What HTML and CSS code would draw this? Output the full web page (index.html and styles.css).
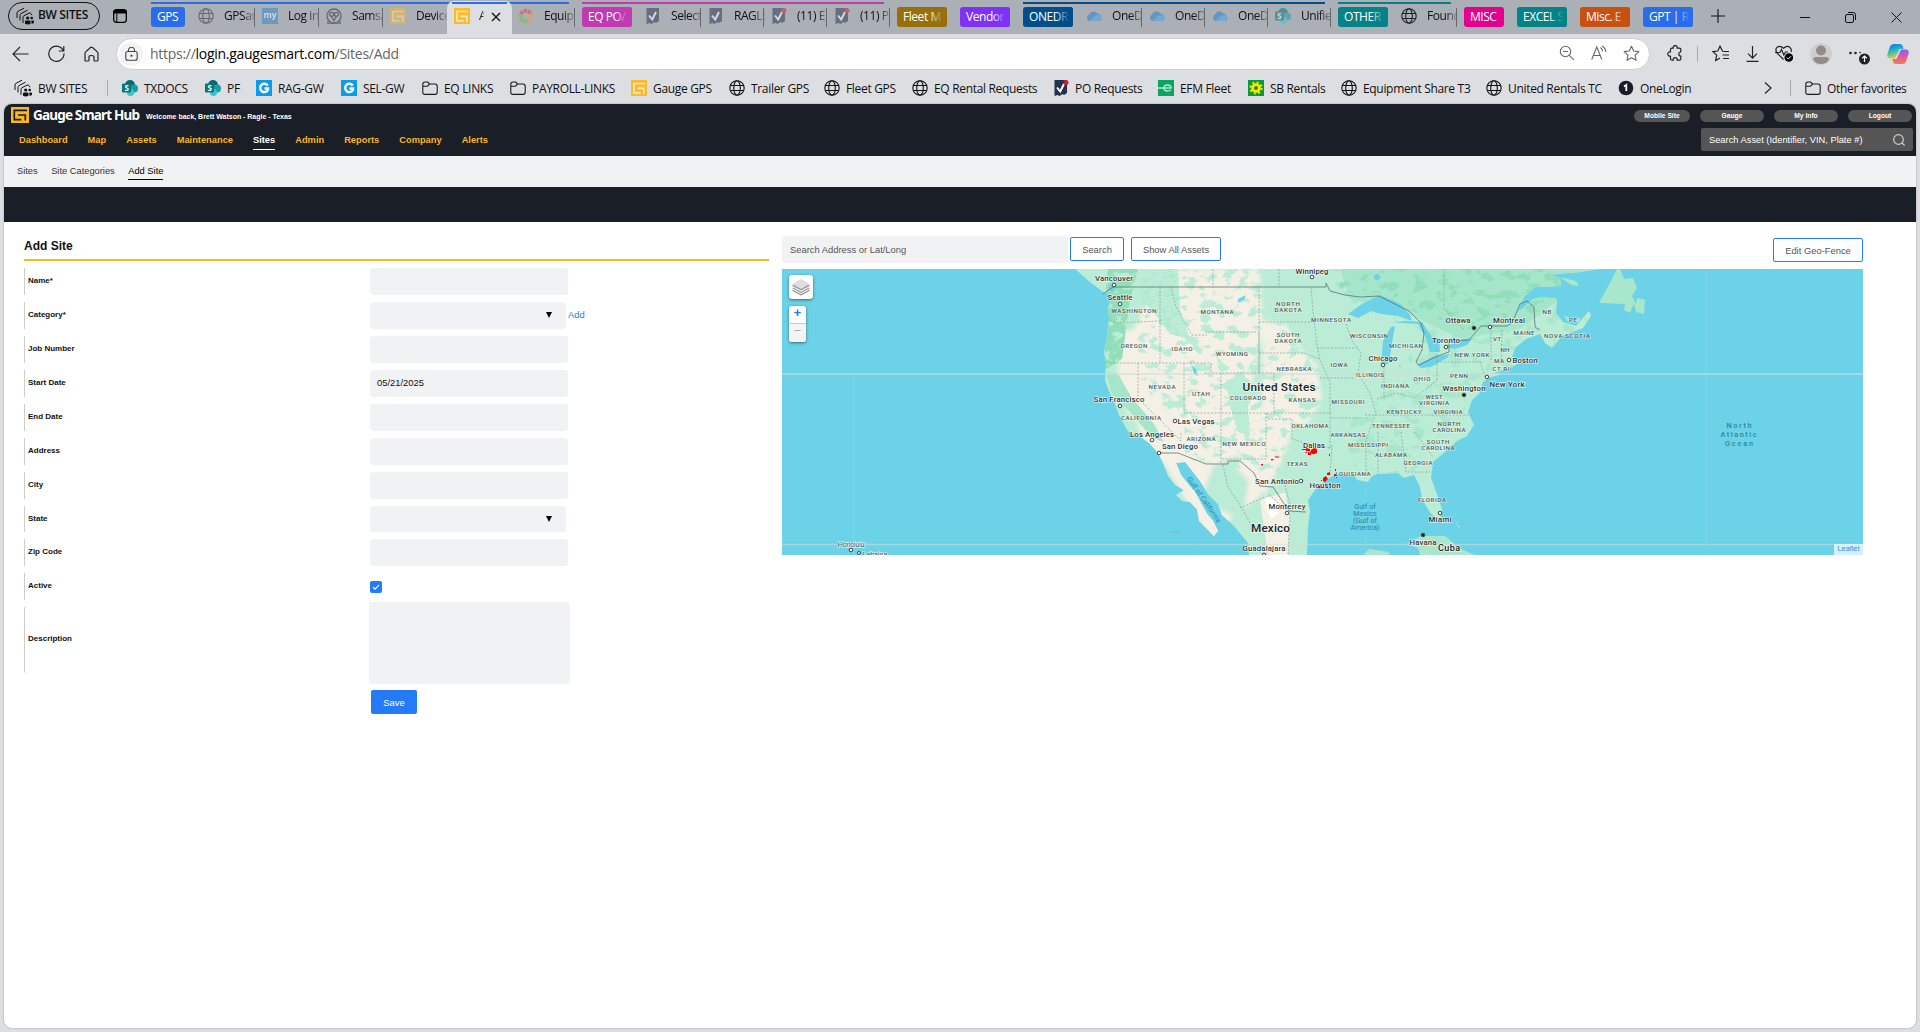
FILE: index.html
```html
<!DOCTYPE html>
<html lang="en">
<head>
<meta charset="utf-8">
<title>Gauge Smart Hub - Add Site</title>
<link rel="stylesheet" href="styles.css">
</head>
<body>
<svg class="defs" width="0" height="0">
  <symbol id="globe" viewBox="0 0 16 16"><g fill="none" stroke="currentColor" stroke-width="1.1"><circle cx="8" cy="8" r="7.2"/><ellipse cx="8" cy="8" rx="3.3" ry="7.2"/><path d="M1.4 5.500h13.200M1.400 10.500h13.200"/></g></symbol>
  <symbol id="folder" viewBox="0 0 16 16"><path d="M.8 4.200q0-2.200 2.200-2.200h2.600l2 2H13q2.200 0 2.200 2.200v6q0 2.200-2.200 2.200H3q-2.200 0-2.200-2.200zM.8 6.300h4.600l2.200-2.300" fill="none" stroke="#1b1b1b" stroke-width="1.1"/></symbol>
  <symbol id="gauge" viewBox="0 0 16 16"><path d="M0 0h16v16H0z" fill="#fdb927"/><path d="M14 3.500H3v9.300h6.500M6.500 8.300h6.300v5.700" fill="none" stroke="#f9e9c8" stroke-width="1.700"/></symbol>
  <symbol id="sharepoint" viewBox="0 0 16 16"><circle cx="8" cy="5" r="5" fill="#036c70"/><circle cx="12" cy="8.500" r="4" fill="#1a9ba1"/><circle cx="8.500" cy="12.500" r="3.500" fill="#37c6d0"/><rect y="3.500" width="9" height="9" rx="1" fill="#03787c"/><text x="4.500" y="11" class="sym-text" font-size="8">S</text></symbol>
  <symbol id="gw" viewBox="0 0 16 16"><path d="M0 0h16v16H0z" fill="#0a9cec"/><path d="M11.800 5.500A4.200 4.200 0 1 0 12 10V8.500H8.500" fill="none" stroke="#fff" stroke-width="2.400"/></symbol>
  <symbol id="check" viewBox="0 0 16 16"><path d="M1.500 0h12.500v13l-3 2-1.500-1-3 2-2-1-3 1z" fill="#22314d"/><path d="M4 7.500l3.200 4L11 4" fill="none" stroke="#fff" stroke-width="2"/></symbol>
  <symbol id="cloud" viewBox="0 0 16 16"><path d="M3.500 13A3.500 3.500 0 0 1 3 6.500 5 5 0 0 1 11.500 5.500 4 4 0 0 1 13 13z" fill="#1f7fce"/><path d="M3.500 13l6-5.500q6-2 6.500 3 0 2.500-3 2.500z" fill="#3fa5e5"/></symbol>
  <symbol id="sites" viewBox="0 0 18 18"><g fill="none" stroke="#111" stroke-width="1"><path d="M1 11V6Q1 4.800 2 4.300L8 1.200M4 13.500V8.300Q4 7.100 5 6.600L11.500 3.200M7 16V10.200Q7 9.200 8 8.700L13 6.100Q14.200 5.500 15 6.600L16 8.200"/></g><g fill="#111"><circle cx="11.700" cy="11" r="1.600"/><circle cx="15.700" cy="11" r="1.300"/><path d="M9 16.800v-2.300q0-1 1-1h3.500q1 0 1 1v2.300q-2.800 1.300-5.500 0zM15.300 13.500h1.700q1 0 1 1v1.300q-1 1-2.500.800z"/></g></symbol>
  <filter id="blotch" x="0" y="0" width="1" height="1">
    <feTurbulence type="fractalNoise" baseFrequency=".08 .11" numOctaves="4" seed="11"/>
    <feColorMatrix values="0 0 0 0 0  0 0 0 0 0  0 0 0 0 0  9 0 0 0 -4.900"/>
    <feComposite operator="in" in="SourceGraphic"/>
  </filter>
  <filter id="soft"><feGaussianBlur stdDeviation="2"/></filter>
</svg>

<header class="tabstrip">
  <div class="workspace"><svg width="18" height="18"><use href="#sites"/></svg><span>BW SITES</span></div>
  <svg class="tabs-btn" width="14" height="14" viewBox="0 0 14 14"><rect x=".7" y=".7" width="12.600" height="12.600" rx="2.500" fill="none" stroke="#000" stroke-width="1.300"/><path d="M1 1.500h12V4H1zM3.800 4v9" fill="#000" stroke="#000" stroke-width="1"/></svg>
  <div class="group blue">
    <span class="chip slim">GPS</span>
    <span class="tab"><svg class="dim"><use href="#globe"/></svg><b>GPSar</b></span>
    <span class="tab"><svg class="dim" viewBox="0 0 16 16"><path d="M0 0h16v16H0z" fill="#2c84c8"/><text x="8" y="9.500" class="sym-text" font-size="8.500">my</text></svg><b>Log in</b></span>
    <span class="tab"><svg class="dim" viewBox="0 0 16 16"><g fill="none" stroke="#222" stroke-width="1.300"><circle cx="8" cy="8" r="7"/><circle cx="5.600" cy="6.300" r="2"/><circle cx="10.400" cy="6.300" r="2"/><path d="M5.800 9L8 12.500 10.200 9M2 13v3h12v-3"/></g></svg><b>Samsa</b></span>
    <span class="tab last"><svg class="dim"><use href="#gauge"/></svg><b>Device</b></span>
    <span class="tab active"><svg><use href="#gauge"/></svg><b>A</b><svg class="close" viewBox="0 0 10 10"><path d="M1 1l8 8M9 1L1 9" stroke="#111" stroke-width="1.300"/></svg></span>
    <span class="tab"><svg class="dim" viewBox="0 0 16 16"><g fill="none" stroke-width="4" stroke-dasharray="3.200 .8"><path d="M3 6A5.500 5.500 0 0 1 13 6" stroke="#f0382c"/><path d="M13 6A5.500 5.500 0 0 1 9 13.300" stroke="#f99a2c"/><path d="M9 13.300A5.500 5.500 0 0 1 3 6" stroke="#67c82b"/></g></svg><b>Equip</b></span>
  </div>
  <div class="group pink">
    <span class="chip">EQ PO/</span>
    <span class="tab"><svg class="dim"><use href="#check"/></svg><b>Select</b></span>
    <span class="tab"><svg class="dim"><use href="#check"/></svg><b>RAGLE</b></span>
    <span class="tab"><svg class="dim" viewBox="0 0 16 16"><use href="#check"/><circle cx="13" cy="2.500" r="2.500" fill="#e0142c"/></svg><b>(11) E</b></span>
    <span class="tab"><svg class="dim" viewBox="0 0 16 16"><use href="#check"/><circle cx="13" cy="2.500" r="2.500" fill="#e0142c"/></svg><b>(11) P</b></span>
  </div>
  <div class="group brown solo"><span class="chip">Fleet M</span></div>
  <div class="group violet solo"><span class="chip">Vendor</span></div>
  <div class="group navy">
    <span class="chip">ONEDR</span>
    <span class="tab"><svg class="dim"><use href="#cloud"/></svg><b>OneD</b></span>
    <span class="tab"><svg class="dim"><use href="#cloud"/></svg><b>OneD</b></span>
    <span class="tab"><svg class="dim"><use href="#cloud"/></svg><b>OneD</b></span>
    <span class="tab"><svg class="dim"><use href="#sharepoint"/></svg><b>Unifie</b></span>
  </div>
  <div class="group teal">
    <span class="chip">OTHER</span>
    <span class="tab"><svg><use href="#globe"/></svg><b>Found</b></span>
  </div>
  <div class="group magenta solo"><span class="chip misc">MISC</span></div>
  <div class="group teal solo"><span class="chip">EXCEL S</span></div>
  <div class="group orange solo"><span class="chip">Misc. E</span></div>
  <div class="group blue solo"><span class="chip">GPT | R</span></div>
  <svg class="plus" width="14" height="14" viewBox="0 0 14 14"><path d="M7 0v14M0 7h14" stroke="#111" stroke-width="1.100"/></svg>
  <div class="winctl">
    <svg width="10" height="11" viewBox="0 0 10 11"><path d="M0 5.500h10" stroke="#111"/></svg>
    <svg width="11" height="11" viewBox="0 0 11 11"><g fill="none" stroke="#111"><rect x=".5" y="2.500" width="8" height="8" rx="1.500"/><path d="M3 .5h5q2.500 0 2.500 2.500v5"/></g></svg>
    <svg width="11" height="11" viewBox="0 0 11 11"><path d="M.5.500l10 10M10.500.500l-10 10" stroke="#111"/></svg>
  </div>
</header>

<div class="toolbar">
  <svg class="nav" width="17" height="16" viewBox="0 0 17 16"><path d="M16.500 8H1M8 1L1 8l7 7" fill="none" stroke="#222" stroke-width="1.100"/></svg>
  <svg class="nav" width="17" height="17" viewBox="0 0 17 17"><path d="M15.500 6A7.600 7.600 0 1 0 16 8.500M15.800 1v5h-5" fill="none" stroke="#222" stroke-width="1.200"/></svg>
  <svg class="nav" width="15" height="16" viewBox="0 0 15 16"><path d="M1 7.500q0-1 .7-1.600L6.500 1.500q1-.800 2 0l4.800 4.400q.7.600.7 1.600V14q0 1-1 1h-2q-1 0-1-1v-3q0-1.500-2.500-1.500T5 11v3q0 1-1 1H2q-1 0-1-1z" fill="none" stroke="#222" stroke-width="1.200"/></svg>
  <div class="urlbar">
    <span class="lock"><svg width="13" height="14" viewBox="0 0 13 14"><rect x=".8" y="4.500" width="11.400" height="8.700" rx="2" fill="none" stroke="#444" stroke-width="1.100"/><path d="M3.500 4.500V3.300a3 3 0 0 1 6 0v1.200" fill="none" stroke="#444" stroke-width="1.100"/><circle cx="6.500" cy="8.800" r="1" fill="#222"/></svg></span>
    <span class="url">https://<em>login.gaugesmart.com</em>/Sites/Add</span>
    <span class="url-icons">
      <svg width="16" height="16" viewBox="0 0 16 16"><g fill="none" stroke="#666" stroke-width="1.100"><circle cx="6.500" cy="6.500" r="5.200"/><path d="M10.300 10.300l4.500 4.500M4 6.500h5"/></g></svg>
      <svg width="16" height="16" viewBox="0 0 16 16"><g fill="none" stroke="#666" stroke-width="1.100"><path d="M.7 14.500L5.800 2l5 12.500M2.500 10.500h6.700M9.500 2.500q2 1.500 2 4M11 1q3.800 2.200 3.800 6"/></g></svg>
      <svg width="17" height="17" viewBox="0 0 17 17"><path d="M8.500 1.200l2.200 4.800 5.200.600-3.900 3.500 1.100 5.200-4.600-2.600-4.600 2.600L5 10.100 1.100 6.600l5.200-.600z" fill="none" stroke="#666" stroke-width="1.100" stroke-linejoin="round"/></svg>
    </span>
  </div>
  <div class="tools">
    <svg width="16" height="17" viewBox="0 0 16 17"><path d="M5 3.200h1.300a2 2 0 1 1 3.800 0h2.400q1.300 0 1.300 1.300V7a2 2 0 1 0 0 4v2.700q0 1.500-1.300 1.500h-2.400a2 2 0 1 0-3.800 0H5q-1.500 0-1.500-1.500V11a2.100 2.100 0 1 1 0-4V4.500q0-1.300 1.500-1.300z" fill="none" stroke="#222" stroke-width="1.200" stroke-linejoin="round"/></svg>
    <i class="sep"></i>
    <svg width="17" height="17" viewBox="0 0 17 17"><path d="M10.500 6L8 1.200 5.800 6 1 6.600l3.700 3.500-1 5.400L8 13M10.500 6.500H17M10.500 10H17M11 13.500h6" fill="none" stroke="#222" stroke-width="1.200"/></svg>
    <svg width="13" height="17" viewBox="0 0 13 17"><path d="M6.500 1v12M2 8.700l4.500 4.500L11 8.700M.5 16.300h12" fill="none" stroke="#222" stroke-width="1.200"/></svg>
    <svg width="18" height="17" viewBox="0 0 18 17"><path d="M8.500 14.500L2 8Q-.500 4 2.500 2q3-1.500 6 1.300Q11.500.500 14.500 2q2.500 2 1.500 5M0 7.500h5l1.500-3 2.300 5.500L10.500 7H13" fill="none" stroke="#222" stroke-width="1.200"/><circle cx="13.800" cy="12.500" r="4.300"/><path d="M11.800 12.500l1.500 1.500 2.700-2.800" fill="none" stroke="#fff"/></svg>
    <svg width="22" height="22" viewBox="0 0 22 22"><circle cx="11" cy="11" r="11" fill="#d0cecd"/><circle cx="11" cy="7.500" r="5" fill="#918c89"/><path d="M3 16.500q0-2.500 3-2.500h10q3 0 3 2.500Q16.500 21 11 21t-8-4.500z" fill="#918c89"/></svg>
    <svg width="21" height="22" viewBox="0 0 21 22"><g fill="#222"><circle cx="1.500" cy="10" r="1.300"/><circle cx="6.500" cy="10" r="1.300"/><circle cx="11" cy="9.500" r=".8"/><circle cx="15.500" cy="16" r="5.500"/></g><path d="M15.500 19v-6M13.200 15.200l2.300-2.200 2.300 2.200" fill="none" stroke="#fff" stroke-width="1.200"/></svg>
    <svg width="22" height="20" viewBox="0 0 22 20"><defs><linearGradient id="c1" x2=".3" y2="1"><stop stop-color="#1470dd"/><stop offset=".5" stop-color="#1fb5c9"/><stop offset="1" stop-color="#e6cc2c"/></linearGradient><linearGradient id="c2" x2="0" y2="1"><stop stop-color="#8a5cf0"/><stop offset=".5" stop-color="#e05aa8"/><stop offset="1" stop-color="#ff7a45"/></linearGradient></defs><path d="M6.500 0h6.500q2.500 0 3 2.500L16.500 5h-4L8 14.500H3Q-.500 14 .5 10L3 2.500Q4 0 6.500 0z" fill="url(#c1)"/><path d="M15.500 20H9q-2.500 0-3-2.500l-.5-2.500h4L14 5.500h5q3.500.500 2.500 4.500L19 17.500q-1 2.500-3.500 2.500z" fill="url(#c2)"/></svg>
  </div>
</div>

<nav class="bookmarks">
  <span class="mark"><svg width="18" height="18"><use href="#sites"/></svg>BW SITES</span>
  <i class="sep"></i>
  <span class="mark"><svg><use href="#sharepoint"/></svg>TXDOCS</span>
  <span class="mark"><svg><use href="#sharepoint"/></svg>PF</span>
  <span class="mark"><svg><use href="#gw"/></svg>RAG-GW</span>
  <span class="mark"><svg><use href="#gw"/></svg>SEL-GW</span>
  <span class="mark"><svg><use href="#folder"/></svg>EQ LINKS</span>
  <span class="mark"><svg><use href="#folder"/></svg>PAYROLL-LINKS</span>
  <span class="mark"><svg><use href="#gauge"/></svg>Gauge GPS</span>
  <span class="mark"><svg><use href="#globe"/></svg>Trailer GPS</span>
  <span class="mark"><svg><use href="#globe"/></svg>Fleet GPS</span>
  <span class="mark"><svg><use href="#globe"/></svg>EQ Rental Requests</span>
  <span class="mark"><svg viewBox="0 0 16 16"><use href="#check"/><circle cx="13" cy="2.500" r="2.500" fill="#e0142c"/></svg>PO Requests</span>
  <span class="mark"><svg viewBox="0 0 16 16"><path d="M0 0h16v16H0z" fill="#0aa562"/><path d="M0 8h13q0-3-3.500-3T6 8q0 3 3.500 3 2 0 3.500-1" fill="none" stroke="#b5e8cf" stroke-width="1.500"/></svg>EFM Fleet</span>
  <span class="mark"><svg viewBox="0 0 16 16"><path d="M0 0h16v16H0z" fill="#0a9a3a"/><circle cx="8" cy="8" r="3.400" fill="none" stroke="#ffe500" stroke-width="2.800"/><circle cx="8" cy="8" r="5.600" fill="none" stroke="#ffe500" stroke-width="2" stroke-dasharray="2 2.400"/></svg>SB Rentals</span>
  <span class="mark"><svg><use href="#globe"/></svg>Equipment Share T3</span>
  <span class="mark"><svg><use href="#globe"/></svg>United Rentals TC</span>
  <span class="mark"><svg viewBox="0 0 16 16"><circle cx="8" cy="8" r="7.300" fill="#1a1c28"/><path d="M6 6.500L8.300 5v6" fill="none" stroke="#fff" stroke-width="1.800"/></svg>OneLogin</span>
  <svg class="chev" width="8" height="12" viewBox="0 0 8 12"><path d="M1 .5L7 6l-6 5.500" fill="none" stroke="#222" stroke-width="1.200"/></svg>
  <i class="sep"></i>
  <span class="mark other"><svg><use href="#folder"/></svg>Other favorites</span>
</nav>

<main class="page">
  <header class="hub">
    <div class="hub-left">
      <div class="brand">
        <svg width="18" height="16" viewBox="0 0 18 16"><path d="M0 0h18v16H0z" fill="#fbb623"/><path d="M16 3.300H3.300v9.400h7M7 8h7.300v5.500" fill="none" stroke="#1a1e26" stroke-width="1.700"/></svg>
        <strong>Gauge Smart Hub</strong><small>Welcome back, Brett Watson - Ragle - Texas</small>
      </div>
      <nav class="menu"><a>Dashboard</a><a>Map</a><a>Assets</a><a>Maintenance</a><a class="on">Sites</a><a>Admin</a><a>Reports</a><a>Company</a><a>Alerts</a></nav>
    </div>
    <div class="hub-right">
      <div class="pills"><a class="narrow">Mobile Site</a><a>Gauge</a><a>My Info</a><a>Logout</a></div>
      <div class="asset-search"><span>Search Asset (Identifier, VIN, Plate #)</span><svg width="12" height="12" viewBox="0 0 12 12"><g fill="none" stroke="#ccc" stroke-width="1.200"><circle cx="5.500" cy="5.500" r="4.800"/><path d="M9 9l2.700 2.500"/></g></svg></div>
    </div>
  </header>
  <nav class="submenu"><a>Sites</a><a>Site Categories</a><a class="on">Add Site</a></nav>
  <div class="band"></div>
  <div class="content">
    <form class="site-form">
      <h1>Add Site</h1>
      <div class="row"><label>Name*</label><span class="field"></span></div>
      <div class="row"><label>Category*</label><span class="field select"></span><a class="add">Add</a></div>
      <div class="row"><label>Job Number</label><span class="field"></span></div>
      <div class="row"><label>Start Date</label><span class="field">05/21/2025</span></div>
      <div class="row"><label>End Date</label><span class="field"></span></div>
      <div class="row"><label>Address</label><span class="field"></span></div>
      <div class="row"><label>City</label><span class="field"></span></div>
      <div class="row state"><label>State</label><span class="field select"></span></div>
      <div class="row"><label>Zip Code</label><span class="field"></span></div>
      <div class="row active-row"><label>Active</label><span class="checkbox"><svg width="8" height="8" viewBox="0 0 8 8"><path d="M1 4.200l2 2L7 2" fill="none" stroke="#fff" stroke-width="1.100"/></svg></span></div>
      <div class="row desc"><label>Description</label><span class="field area"></span></div>
      <span class="save">Save</span>
    </form>
    <section class="map-col">
      <div class="map-tools"><span class="addr">Search Address or Lat/Long</span><span class="btn search">Search</span><span class="btn show">Show All Assets</span><span class="btn fence">Edit Geo-Fence</span></div>
      <div class="map">
        <svg width="1081" height="286" viewBox="782 269 1081 286">
          <defs>
            <path id="land" d="M1075 269L1090 282 1103 292 1112 296 1108 307 1109 320 1107 337 1104 352 1106 362 1105 380 1108 389 1115 404 1119 415 1127 430 1131 434 1142 438 1150 444 1158 453 1163 463 1168 476 1175 485 1184 490 1176 495 1182 501 1190 502 1197 509 1199 521 1208 530 1214 536 1218 531 1213 521 1207 514 1202 505 1195 492 1188 484 1181 475 1176 463 1185 462 1193 472 1200 481 1208 494 1218 504 1222 515 1234 526 1248 543 1249 555H1307L1308 527 1310 511 1308 500 1318 486 1331 477 1338 474 1346 474 1354 475 1357 480 1368 482 1372 476 1378 474 1398 473 1404 478 1414 475 1420 487 1422 499 1431 514 1440 520 1442 509 1437 494 1431 478 1433 462 1445 452 1457 441 1467 436 1474 425 1468 412 1472 400 1479 394 1483 382 1491 377 1503 374 1494 373 1510 368 1521 362 1512 357 1515 348 1526 339 1540 334 1545 343 1552 348 1562 336 1583 328 1591 316 1589 311 1576 326 1563 322 1556 313 1557 299 1544 297 1533 299 1522 309 1517 312 1524 297 1535 287 1561 286 1560 278 1548 275 1580 272 1600 269z"/>
            <clipPath id="on-land"><use href="#land"/></clipPath>
          </defs>
          <path d="M782 269h1081v286H782z" fill="#6cd2e7"/>
          <use href="#land" fill="#bbecd6"/>
          <g clip-path="url(#on-land)">
            <path d="M1320 269h290v85l-90 20-45 15-20 40-50 50h-45l-20-50 60-50 20-50-60-20z" fill="#a9e7cc" filter="url(#blotch)"/>
            <path d="M1340 269h260l-80 60-60 10-50-25-60-15z" fill="#a5e6ca"/>
            <path d="M1340 269h240l-50 50-60 10-130-40z" fill="#90dfba" filter="url(#blotch)"/>
            <g filter="url(#soft)"><path d="M1155 269h105l3 60-6 26-4 25 10 35 5 42-8 40-30 22-16 26-18-28-30-50-25-32-10-30-8-25 6-45 10-15z" fill="#f5f0e5"/><path d="M1200 500l14-35 26-10 10 20-8 45z" fill="#bbecd6"/><path d="M1120 330h38v36l-18 10 15 28 22 36-8 6-40-32-12-40z" fill="#f5f0e5"/><path d="M1262 320l25 5 15 25 15 15 5 35-15 25-45-5z" fill="#f5f0e5"/><path d="M1255 410l38 15-8 30-20 40-28-25z" fill="#f5f0e5"/></g>
            <path d="M1165 455l16 32 30 46 8-6-40-62z" fill="#f5f0e5"/>
            <path d="M1260 500l25-8 5 25-2 38h-20z" fill="#f5f0e5"/>
            <path d="M1108 269h30l-8 30-8 60-16 10-3-40z" fill="#90dfba"/>
            <path d="M1108 269h30l-8 30-8 60-16 10-3-40z" fill="#bbecd6" filter="url(#blotch)"/>
            <path d="M1140 269h38l2 40 10 30-20-5-15-20-14-15z" fill="#bbecd6"/>
            <path d="M1140 269h38l2 40 10 30-20-5-15-20-14-15z" fill="#80dab0" filter="url(#blotch)"/>
            <path d="M1135 269h115v70l-10 60-30 50-70-60z" fill="#bbecd6" filter="url(#blotch)"/>
            <path d="M1180 269h155v140l-40 70-110-20z" fill="#bbecd6" filter="url(#blotch)"/>
            <path d="M1226 380l18-4 14 12-10 18 2 30-12-4-8-26z" fill="#bbecd6"/>
            <path d="M1106 372l12 2 14 24 22 26 10 18-12-4-22-26-18-18z" fill="#a5e6ca"/>
            <path d="M1265 495l10 6 4 12-8 6-4-10z" fill="#fff"/>
          </g>
          <g fill="#6cd2e7">
            <path d="M1348 314l14-10 18-9 20 9 10 11 2 6-14-5-17-2-10-3-13 7z"/><path d="M1381 365l2-24 8-14 4-1-3 17-2 14-2 7z"/><path d="M1392 323l14-2 16 1 10 15 7 1 1 14-10 0-4-14-8-14-14-1z"/><path d="M1417 365l16-8 17-3-3 4-16 9-10 1z"/><path d="M1445 347l18-8 10-1-6 7-12 4z"/><path d="M1192 366l4 3 2 7-4-2zM1238 299l8-4-2 5-6 2z"/><circle cx="1377" cy="277" r="3"/><circle cx="1112" cy="288" r="3"/>
          </g>
          <g fill="#a9e7cc">
            <path d="M1617 269l-6 12-12 22 26 1-1 6 6 3 4-9 2 8 8 2 1-14-8-2-1 6-4-8 5-8-4-10-9 1-4-10z"/><path d="M1560 277l16 4 3 5-8-1z"/>
            <path d="M1407 544l14-8 24 0 14 12 16 7h-55l-2-7z"/><path d="M1363 555l6-6 20 3v3z"/><path d="M1451 506l8 1M1455 519l5 9-2-1z"/><path d="M1564 315l9 5 8-2-2 4-12-1z"/>
          </g>
          <g fill="none" stroke="#d3dad7" opacity=".55"><path d="M782 374h1081" stroke-width="2"/><path d="M782 544.500h1081" stroke-width="1.500"/></g>
          <path d="M853.500 374v181M1194.500 544v11M1365.500 480v75M1706.500 269v286" stroke="#8ddbea" stroke-width=".7" opacity=".6"/>
          <g fill="none" stroke="#8fa8a0" stroke-width=".8" stroke-dasharray="2 1.500">
            <path d="M1107 318l9 5 44-2M1160 287v76M1106 363h105v10M1160 321l2-2M1171 287l5 20 8 14 8 14h15M1205 332h54v41h-54M1259 287v86M1259 322h54M1259 353h45l15 6M1259 373h15v40M1138 363v35l43 43v-9M1184 363v50h90M1221 373v90M1274 413h56v-31l-10-22-3-15-4-34-2-24M1213 269v18M1279 269v18M1267 413v6h25v20l20 6 20 3M1266 413v46h-45M1317 348h40M1346 324l5 15 10 14-3 20M1320 378h35M1330 413v35h-3M1331 418h38M1358 373l12 20 6 20-10 27v35M1384 367v32M1400 367v-3M1437 350v30M1365 415h108M1377 399l20-6 18 5 22-18M1378 432v45M1401 432l5 40h24M1415 432l18 25M1437 362h46M1480 362l5 15M1444 269v40l20 20M1491 330v30M1502 330l-1 35M1170 532h10M1330 475l2-30"/>
            <path d="M1223 465l5 22 14 21 8 15M1240 508l30-13 20 20-2 40M1285 485l5 20"/>
          </g>
          <g fill="none" stroke="#4b5f60" stroke-width=".8" opacity=".85">
            <path d="M1103 294l10-7H1326v-4l4 8 15 4 15 2 19-1 30 15 12 12 3 10-2 17-6 12 3 3 16-8 14-5v-11l20-1 12-14h26l5-3 8-19 7-3 7 6 1 20 5 3"/>
            <path d="M1159 453l19 0 28 11h22v-3h12l14 12 6 13 13 1 12 18 4 6 17 1"/>
          </g>
          <g fill="#fff" stroke="#444">
            <circle cx="1114" cy="285" r="1.800"/><circle cx="1120" cy="304" r="1.800"/><circle cx="1120" cy="406" r="1.800"/><circle cx="1175" cy="421" r="1.800"/><circle cx="1152" cy="440" r="1.800"/><circle cx="1159" cy="453" r="1.800"/><circle cx="1312" cy="277" r="1.800"/><circle cx="1301" cy="481" r="1.800"/><circle cx="1287" cy="513" r="1.800"/><circle cx="1264" cy="555" r="1.800"/><circle cx="1383" cy="365" r="1.800"/><circle cx="1490" cy="327" r="1.800"/><circle cx="1446" cy="347" r="1.800"/><circle cx="1509" cy="360" r="1.800"/><circle cx="1487" cy="377" r="1.800"/><circle cx="1440" cy="513" r="1.800"/><circle cx="851" cy="550" r="1.800"/><circle cx="859" cy="553" r="1.500"/>
            <circle cx="1474" cy="328" r="1.800" fill="#222"/><circle cx="1464" cy="395" r="1.800" fill="#222"/><circle cx="1423" cy="535" r="1.800" fill="#222"/>
          </g>
          <g class="state-name">
            <text x="1134" y="313" textLength="45">WASHINGTON</text><text x="1217" y="314" textLength="33">MONTANA</text><text x="1134" y="348" textLength="27">OREGON</text><text x="1182" y="350.500" textLength="21">IDAHO</text><text x="1232" y="356" textLength="32">WYOMING</text><text x="1162" y="389" textLength="27">NEVADA</text><text x="1201" y="396" textLength="18">UTAH</text><text x="1248" y="400" textLength="36">COLORADO</text><text x="1141" y="420" textLength="40">CALIFORNIA</text><text x="1201" y="441" textLength="29">ARIZONA</text><text x="1244" y="446" textLength="43">NEW MEXICO</text><text x="1288" y="305.500" textLength="24">NORTH</text><text x="1288" y="311.500" textLength="27">DAKOTA</text><text x="1288" y="337" textLength="23">SOUTH</text><text x="1288" y="343" textLength="27">DAKOTA</text><text x="1331" y="322" textLength="40">MINNESOTA</text><text x="1294" y="371" textLength="35">NEBRASKA</text><text x="1339" y="366.500" textLength="17">IOWA</text><text x="1302" y="401.500" textLength="27">KANSAS</text><text x="1348" y="403.500" textLength="33">MISSOURI</text><text x="1310" y="428" textLength="37">OKLAHOMA</text><text x="1348" y="437" textLength="35">ARKANSAS</text><text x="1297" y="466" textLength="21">TEXAS</text><text x="1353" y="476" textLength="35">LOUISIANA</text><text x="1369" y="338" textLength="38">WISCONSIN</text><text x="1406" y="348" textLength="34">MICHIGAN</text><text x="1370" y="376.500" textLength="28">ILLINOIS</text><text x="1395" y="388" textLength="28">INDIANA</text><text x="1422" y="381" textLength="17">OHIO</text><text x="1459" y="378" textLength="18">PENN</text><text x="1472" y="357" textLength="35">NEW YORK</text><text x="1497" y="341" textLength="8">VT</text><text x="1505" y="351.500" textLength="9">NH</text><text x="1499" y="362.500" textLength="10">MA</text><text x="1501" y="370.500" textLength="17">CT RI</text><text x="1524" y="334.500" textLength="21">MAINE</text><text x="1547" y="314" textLength="9">NB</text><text x="1573" y="322" textLength="8">PE</text><text x="1567" y="338" textLength="46">NOVA SCOTIA</text><text x="1434" y="399" textLength="17">WEST</text><text x="1434" y="405" textLength="30">VIRGINIA</text><text x="1404" y="414" textLength="35">KENTUCKY</text><text x="1448" y="414" textLength="29">VIRGINIA</text><text x="1391" y="428" textLength="38">TENNESSEE</text><text x="1449" y="426" textLength="23">NORTH</text><text x="1449" y="432" textLength="33">CAROLINA</text><text x="1438" y="444" textLength="23">SOUTH</text><text x="1438" y="450" textLength="33">CAROLINA</text><text x="1368" y="446.500" textLength="40">MISSISSIPPI</text><text x="1391" y="456.500" textLength="32">ALABAMA</text><text x="1418" y="465" textLength="29">GEORGIA</text><text x="1432" y="501.500" textLength="28">FLORIDA</text>
          </g>
          <g class="city">
            <text x="1114" y="281" textLength="38">Vancouver</text><text x="1120" y="300" textLength="25">Seattle</text><text x="1119" y="402" textLength="51">San Francisco</text><text x="1196" y="424" textLength="37">Las Vegas</text><text x="1152" y="437" textLength="44">Los Angeles</text><text x="1180" y="449" textLength="36">San Diego</text><text x="1312" y="274" textLength="33">Winnipeg</text><text x="1277" y="484" textLength="44">San Antonio</text><text x="1325" y="488" textLength="31">Houston</text><text x="1314" y="448" textLength="22">Dallas</text><text x="1287" y="509" textLength="37">Monterrey</text><text x="1264" y="551" textLength="43">Guadalajara</text><text x="1383" y="361" textLength="29">Chicago</text><text x="1458" y="323" textLength="25">Ottawa</text><text x="1509" y="323" textLength="32">Montreal</text><text x="1446" y="343" textLength="28">Toronto</text><text x="1525" y="363" textLength="25">Boston</text><text x="1507" y="387" textLength="35">New York</text><text x="1464" y="391" textLength="43">Washington</text><text x="1440" y="522" textLength="23">Miami</text><text x="1423" y="545" textLength="27">Havana</text><text x="851" y="547" textLength="27" class="thin">Honolulu</text><text x="875" y="556.500" textLength="25" class="thin">Lahaina</text>
          </g>
          <g class="country"><text x="1279" y="390.500" textLength="73">United States</text><text x="1270.500" y="532" textLength="39">Mexico</text><text x="1449" y="551" textLength="22" class="small">Cuba</text></g>
          <g class="sea"><text x="1365" y="509">Gulf of</text><text x="1365" y="516">Mexico</text><text x="1365" y="522.500">(Gulf of</text><text x="1365" y="529.500">America)</text><text transform="translate(1202 501) rotate(55)" textLength="54">Gulf of California</text><g class="ocean"><text x="1739" y="428" textLength="25">North</text><text x="1738.500" y="437" textLength="36">Atlantic</text><text x="1739" y="445.500" textLength="28">Ocean</text></g></g>
          <g fill="#f00"><path d="M1302 449h7v1h-7zM1306 448l4 1v2h-4zM1311 450l3-2 3 1v4l-3 1-4-1zM1304 453l3-1v1zM1308 452l3 1v2h-3zM1261 464h2v1.200h-2zM1271 459h2.500v1.300h-2.500zM1275 456.500h4v1h-4zM1329 454h1v2h-1zM1327 473l3-1v3h-3zM1323 478l3-2 2 3-3 3-2-1zM1334 474h2v2h-2zM1335 469h1v2h-1zM1336 477h1v1h-1zM1321 480h1v1h-1zM1318 486h2v2h-2z"/><circle cx="1313.500" cy="452" r="2.200"/></g>
        </svg>
        <span class="layers"><svg width="18" height="18" viewBox="0 0 18 18"><path d="M0 12.500l9-5 9 5-9 5z" fill="#777"/><path d="M0 11.500l9-5 9 5-9 5z" fill="#eee"/><path d="M0 10l9-5 9 5-9 5z" fill="#888"/><path d="M0 9l9-5 9 5-9 5z" fill="#eee"/><path d="M0 7.500l9-5 9 5-9 5z" fill="#999"/><path d="M.3 6L9 1l8.700 5L9 11z" fill="#dedede"/></svg></span>
        <span class="zoomer"><b>+</b><b class="off">−</b></span>
        <span class="credit">Leaflet</span>
      </div>
    </section>
  </div>
</main>
</body>
</html>
```
FILE: styles.css
```css
* { box-sizing: border-box; }
body { margin: 0; width: 1920px; height: 1032px; overflow: hidden; background: #dddee2; color: #111; font: 12px "Open Sans", "Noto Sans", sans-serif; }
svg { display: block; flex: none; }
.defs { position: absolute; }
.sym-text { fill: #fff; font-family: "Open Sans", sans-serif; font-weight: 700; text-anchor: middle; }

/* Tab strip */
.tabstrip { display: flex; height: 34px; background: #abafb6; white-space: nowrap; }
.workspace { display: flex; align-items: center; gap: 4px; width: 92px; height: 28px; margin: 2px 0 0 8px; padding-left: 7px; border: 1px solid #111; border-radius: 14px; font-weight: 600; font-size: 12px; line-height: 24px; letter-spacing: -.35px; }
.workspace span { padding-bottom: 2px; }
.tabs-btn { margin: 9px 24px 0 13px; }
.group { display: flex; position: relative; --c: #286eec; }
.group::before { content: ""; position: absolute; left: 0; right: 13px; top: 2px; height: 2px; background: var(--c); }
.group.solo::before { display: none; }
.pink { --c: #c239b3; }
.brown { --c: #986f0b; }
.violet { --c: #8031f8; }
.navy { --c: #004e8c; }
.teal { --c: #038387; }
.magenta { --c: #e3008c; }
.orange { --c: #ca5010; }
.chip { width: 50px; height: 20px; margin: 7px 13px 0 0; padding-left: 6px; border-radius: 3px; background: var(--c); color: #fff; line-height: 19px; letter-spacing: -.45px; overflow: hidden; position: relative; }
.chip::after { content: ""; position: absolute; right: 0; top: 0; width: 18px; height: 20px; background: linear-gradient(90deg, transparent, var(--c) 80%); }
.chip.slim { width: 34px; }
.chip.slim::after, .chip.misc::after { display: none; }
.chip.misc { width: 40px; }
.tab { display: flex; width: 63px; height: 34px; position: relative; }
.blue .tab { width: 64px; }
.tab svg { width: 16px; height: 16px; margin-top: 8px; color: #222; }
.tab .dim { opacity: .5; }
.tab b { width: 31px; margin-left: 10px; overflow: hidden; font-weight: 400; line-height: 32px; letter-spacing: -.45px; -webkit-mask-image: linear-gradient(90deg, #000 60%, rgba(0,0,0,.15)); mask-image: linear-gradient(90deg, #000 60%, rgba(0,0,0,.15)); }
.tab::after { content: ""; position: absolute; right: 7px; top: 8px; height: 19px; width: 1px; background: #666a70; }
.tab.last::after, .tab.active::after { display: none; }
.tab.active::before { content: ""; position: absolute; left: -7px; top: 1px; width: 65px; height: 33px; border-radius: 7px 7px 0 0; background: linear-gradient(#286eec, #286eec) no-repeat 5px 1px / 55px 2px, #dddee2; }
.tab.active svg, .tab.active b { position: relative; }
.tab.active b { width: 5px; margin-left: 9px; }
.tab.active .close { width: 10px; height: 10px; margin: 12px 0 0 7px; }
.plus { margin: 9px 0 0 5px; }
.winctl { display: flex; gap: 35px; margin: 12px 18px 0 auto; }

/* Toolbar */
.toolbar { display: flex; align-items: center; height: 39px; padding: 0 11px 0 12px; }
.nav { margin-right: 19px; }
.urlbar { display: flex; align-items: center; width: 1534px; height: 32px; margin-left: -2px; padding: 0 9px 0 2px; border: 1px solid #cfd0d4; border-radius: 16px; background: #fff; }
.lock { display: flex; align-items: center; justify-content: center; width: 24px; height: 24px; border-radius: 12px; background: #f3f3f4; }
.url { margin-left: 7px; color: #666; font-size: 14px; letter-spacing: -.28px; }
.url em { color: #000; font-style: normal; }
.url-icons { display: flex; gap: 16px; margin-left: auto; }
.tools { display: flex; align-items: center; justify-content: space-between; flex: 1; margin-left: 17px; }
.sep { width: 1px; height: 16px; background: #a9abb0; }
.tools .sep { margin: 0 -3px; }

/* Bookmarks */
.bookmarks { display: flex; align-items: center; height: 31px; padding: 0 0 1px 14px; white-space: nowrap; letter-spacing: -.32px; }
.mark { display: flex; align-items: center; gap: 6px; width: 85px; flex: none; }
.mark svg { width: 16px; height: 16px; }
.mark:nth-child(1) { width: 93px; }
.mark:nth-child(1) svg { width: 18px; height: 18px; }
.mark:nth-child(3) { width: 83px; margin-left: 14px; }
.mark:nth-child(4) { width: 51px; }
.mark:nth-child(6) { width: 81px; }
.mark:nth-child(7) { width: 88px; }
.mark:nth-child(8) { width: 121px; }
.mark:nth-child(9) { width: 98px; }
.mark:nth-child(10) { width: 95px; }
.mark:nth-child(11) { width: 88px; }
.mark:nth-child(12) { width: 141px; }
.mark:nth-child(13) { width: 105px; }
.mark:nth-child(14) { width: 90px; }
.mark:nth-child(15) { width: 93px; }
.mark:nth-child(16) { width: 145px; }
.mark:nth-child(17) { width: 132px; }
.mark:nth-child(18) { width: 146px; }
.chev { margin-right: 18px; }
.mark.other { margin-left: 14px; width: 110px; }

/* Page */
.page { width: 1912px; height: 924px; margin-left: 4px; overflow: hidden; border-radius: 8px; background: #fff; box-shadow: 0 0 2px #999; font: 9.400px "Liberation Sans", Arial, sans-serif; }
.hub { display: flex; justify-content: space-between; height: 52px; background: #1a1e26; color: #fff; }
.brand { display: flex; align-items: center; height: 16px; margin: 3px 0 0 7px; white-space: nowrap; }
.brand strong { margin: 0 6px 0 4px; width: 107px; font: 700 13.500px/16px "Noto Sans", sans-serif; letter-spacing: -.82px; }
.brand small { font-size: 7px; font-weight: 700; margin-top: 2px; letter-spacing: -.02px; }
.menu { display: flex; gap: 20px; margin: 11px 0 0 15px; }
.menu a { color: #fbb623; font-weight: 700; font-size: 9.300px; line-height: 13px; height: 16px; }
.menu .on { color: #fff; border-bottom: 1px solid #fff; }
.hub-right { width: 283px; margin-right: 3px; }
.pills { display: flex; gap: 10px; margin: 6px 1px 0 0; justify-content: flex-end; }
.pills a { width: 64px; height: 12px; border-radius: 6px; background: #555; text-align: center; font-size: 6.700px; font-weight: 700; line-height: 12px; }
.pills .narrow { width: 56px; }
.asset-search { display: flex; align-items: center; justify-content: space-between; width: 212px; height: 23px; margin: 6px 0 0 auto; padding: 0 8px; border-radius: 2px; background: #555; font-size: 9.300px; }
.submenu { display: flex; gap: 13.500px; height: 31px; padding: 9px 0 0 13px; background: #f1f2f4; color: #333; font-size: 9.300px; line-height: 12px; }
.submenu a { height: 15px; }
.submenu .on { color: #000; border-bottom: 1px solid #000; }
.band { height: 35px; background: #1a1e26; }
.content { display: flex; gap: 13px; padding-left: 20px; }
.site-form { width: 745px; }
h1 { height: 39px; margin: 0 0 7px; padding-top: 17px; border-bottom: 2px solid #fbb623; font-size: 12px; line-height: 14px; }
.row { display: flex; height: 27px; margin-bottom: 7px; }
.row label { width: 346px; padding: 7px 0 0 3px; border-left: 1px solid #ccc; font-size: 8px; font-weight: 700; line-height: 12px; }
.field { width: 198px; padding-left: 7px; border-radius: 3px; background: #f1f2f4; line-height: 25px; }
.select { width: 196px; position: relative; }
.select::after { content: ""; position: absolute; right: 14px; top: 10px; border: 3.500px solid transparent; border-top: 6px solid #000; border-bottom: 0; }
.add { margin-left: 2px; color: #247bf5; line-height: 26px; }
.row.state { height: 26px; }
.active-row { margin-bottom: 2px; }
.checkbox { display: flex; align-items: center; justify-content: center; width: 12px; height: 12px; margin-top: 8px; border-radius: 2px; background: #247bf5; }
.row.desc { height: 82px; margin-bottom: 6px; }
.row.desc label { width: 345px; height: 67px; margin-top: 4px; padding-top: 27px; border-radius: 3px 0 0 3px; }
.area { width: 201px; }
.save { display: flex; align-items: center; justify-content: center; width: 46px; height: 24px; margin-left: 347px; border-radius: 2px; background: #247bf5; color: #fff; }
.map-col { width: 1081px; }
.map-tools { display: flex; height: 47px; padding-top: 14px; color: #555; }
.addr { width: 286px; height: 27px; padding-left: 8px; border-radius: 3px; background: #f1f2f4; line-height: 27px; }
.btn { height: 24px; margin-top: 1px; border: 1px solid #247bf5; border-radius: 2px; text-align: center; line-height: 23px; }
.search { width: 54px; margin-left: 2px; }
.show { width: 90px; margin-left: 7px; }
.fence { width: 90px; margin: 2px 0 0 auto; }

/* Map */
.map { position: relative; width: 1081px; height: 286px; overflow: hidden; }
.map text { text-anchor: middle; }
.city { fill: #333; font: 500 7.800px Roboto, sans-serif; paint-order: stroke; stroke: #fff; stroke-opacity: .7; stroke-width: 1.300px; }
.city .thin { font-weight: 400; fill: #47606a; }
.country { fill: #222; font: 500 11.800px Roboto, sans-serif; paint-order: stroke; stroke: #fff; stroke-opacity: .7; stroke-width: 1.500px; }
.country .small { font-size: 9px; }
.state-name { fill: #4b5754; font: 500 6.200px Roboto, sans-serif; paint-order: stroke; stroke: #fff; stroke-opacity: .6; stroke-width: 1.200px; }
.sea { fill: #27879d; font: 7.200px Roboto, sans-serif; }
.ocean { font-weight: 500; }
.layers { position: absolute; left: 7px; top: 6px; width: 24px; height: 24px; padding: 3px; border-radius: 3px; background: #fff; box-shadow: 0 1px 3px rgba(0,0,0,.5); }
.zoomer { position: absolute; left: 7px; top: 37px; width: 17px; height: 36px; border-radius: 3px; overflow: hidden; background: #fff; box-shadow: 0 1px 3px rgba(0,0,0,.5); }
.zoomer b { display: block; height: 18px; border-bottom: 1px solid #ccc; color: #247bf5; font: 700 13px/16px "Liberation Mono", monospace; text-align: center; }
.zoomer .off { border: 0; color: #aaa; background: #f4f4f4; font-weight: 400; }
.credit { position: absolute; right: 0; bottom: 0; width: 29px; height: 11px; background: rgba(255,255,255,.7); color: #2f8ced; font-size: 7.300px; line-height: 10px; text-align: center; }
```
